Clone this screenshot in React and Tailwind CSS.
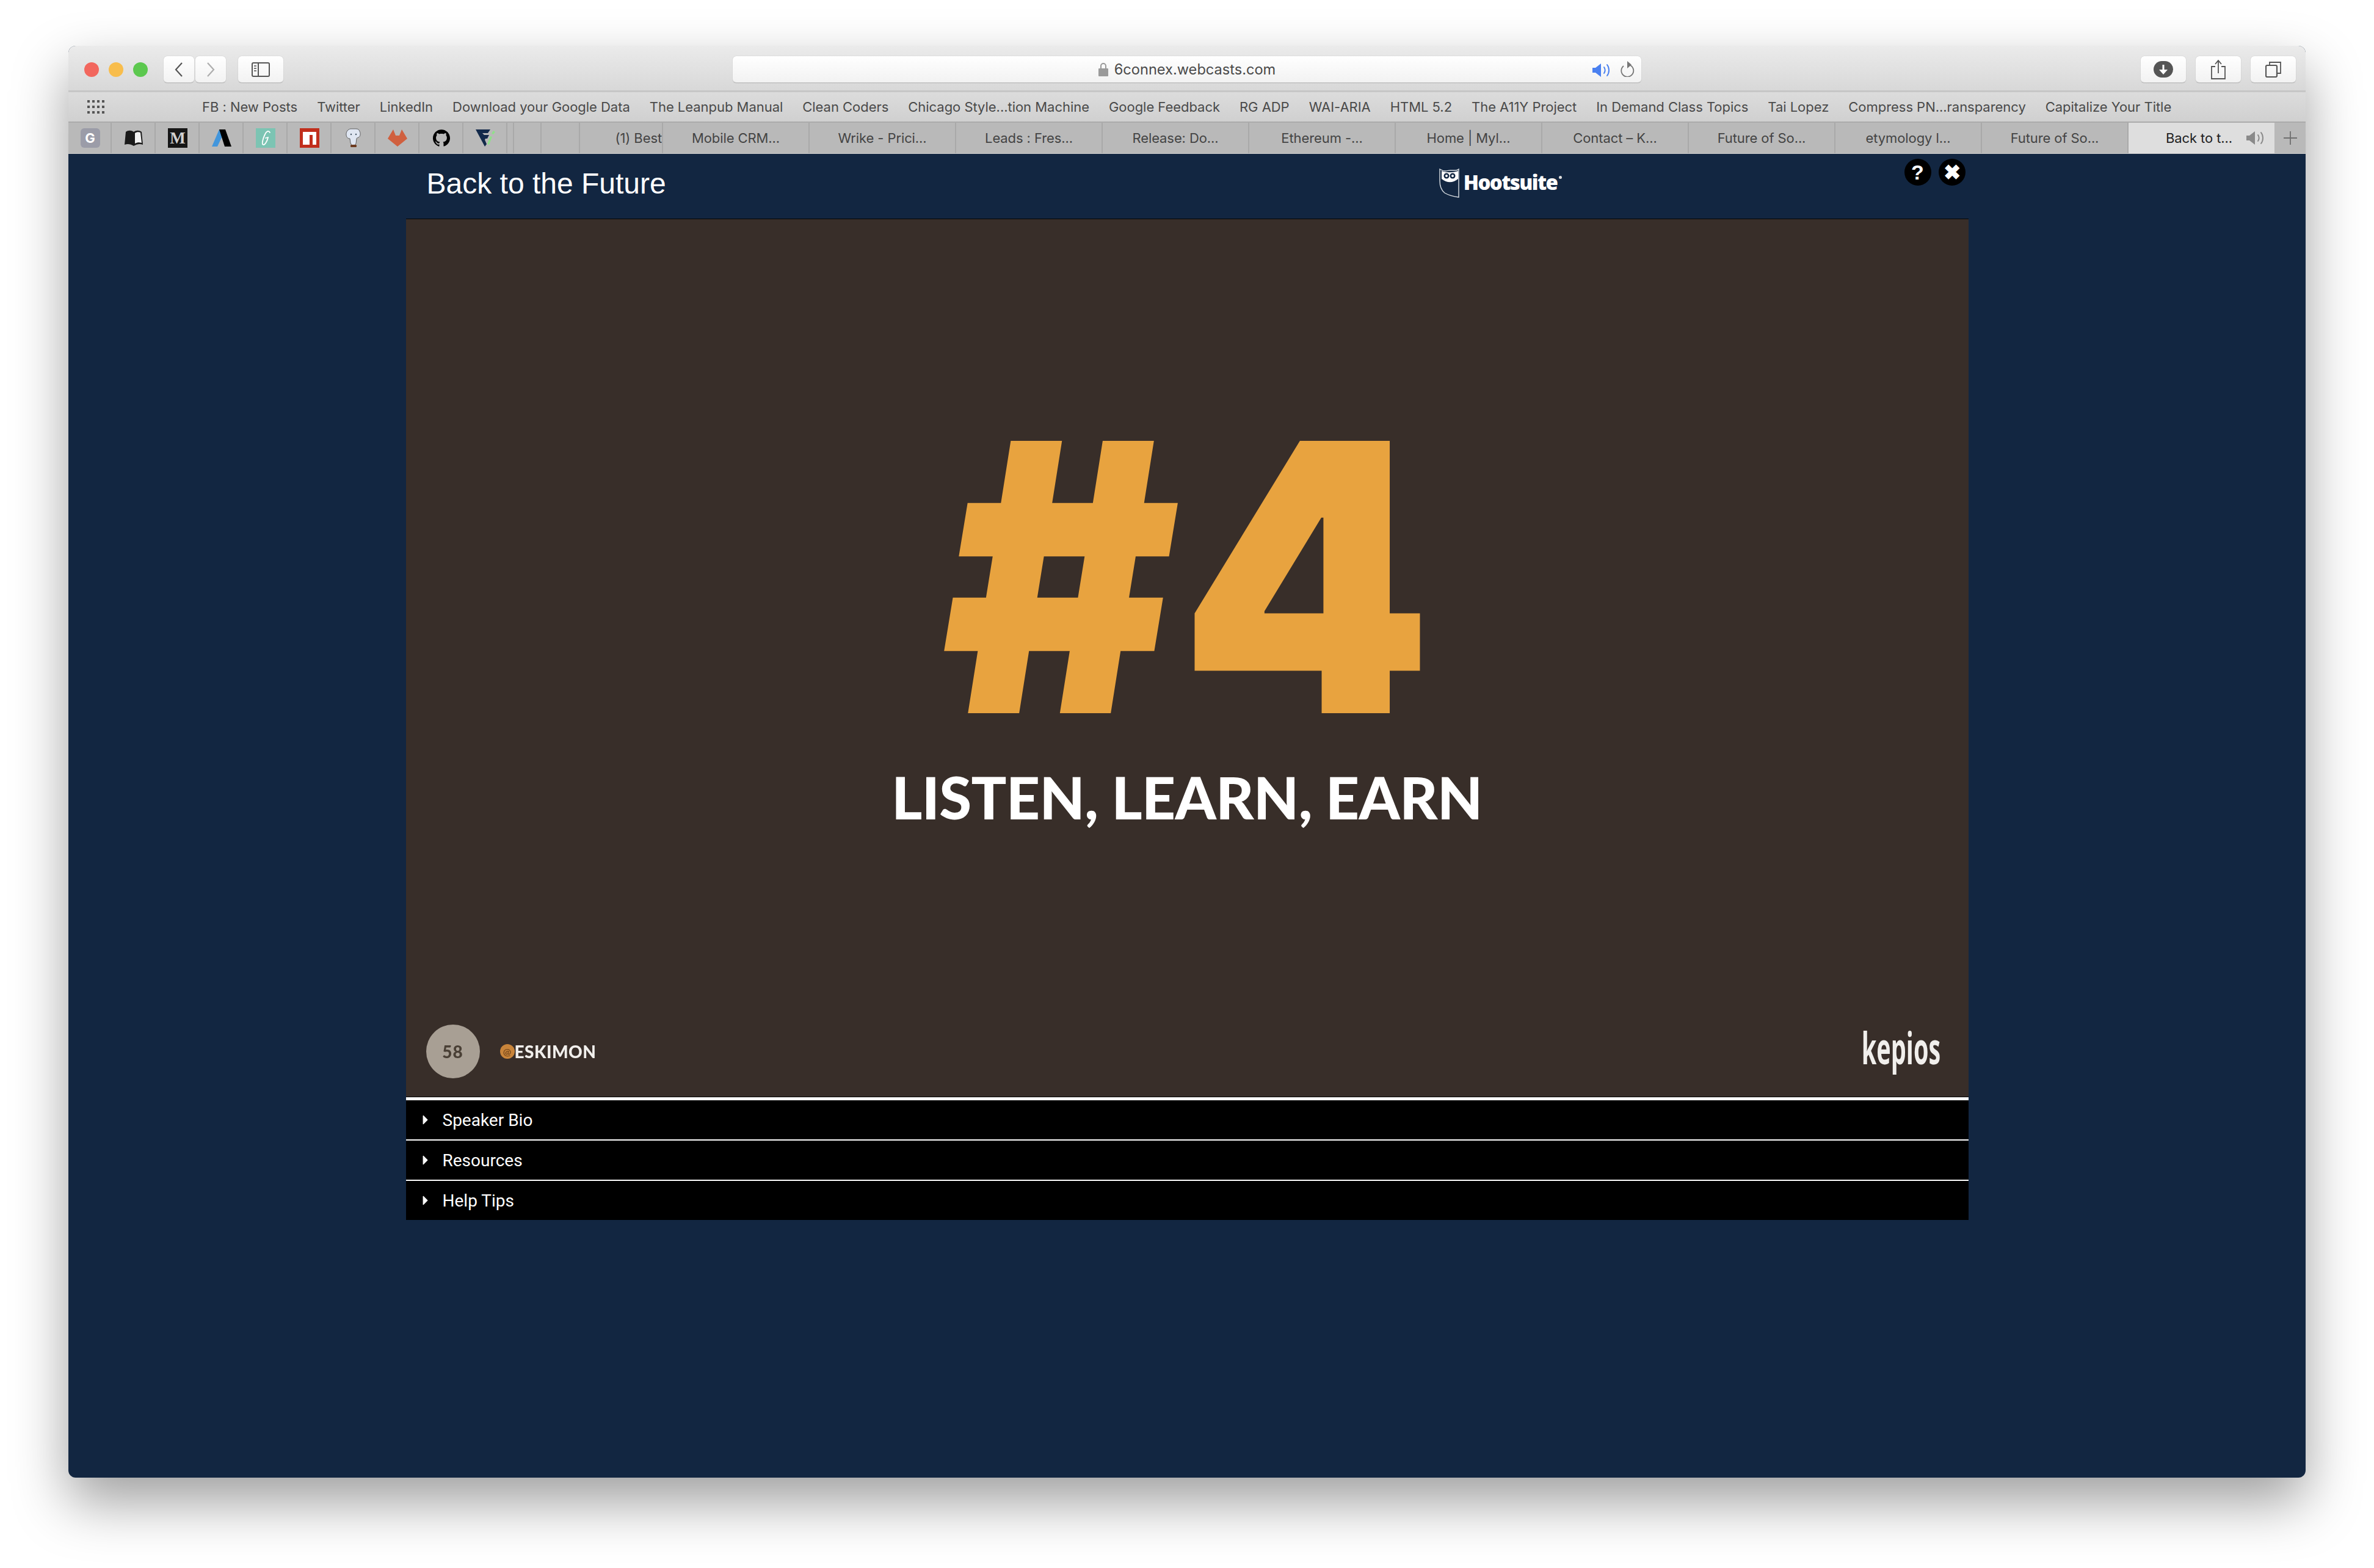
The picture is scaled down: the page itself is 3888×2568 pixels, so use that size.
import { SiGithub } from "react-icons/si";

const sans = "font-['Inter','Noto_Sans',sans-serif]";

const bookmarks = [
  "FB : New Posts",
  "Twitter",
  "LinkedIn",
  "Download your Google Data",
  "The Leanpub Manual",
  "Clean Coders",
  "Chicago Style...tion Machine",
  "Google Feedback",
  "RG ADP",
  "WAI-ARIA",
  "HTML 5.2",
  "The A11Y Project",
  "In Demand Class Topics",
  "Tai Lopez",
  "Compress PN...ransparency",
  "Capitalize Your Title",
];

const tabs = [
  "Mobile CRM...",
  "Wrike - Prici...",
  "Leads : Fres...",
  "Release: Do...",
  "Ethereum -...",
  "Home | Myl...",
  "Contact – K...",
  "Future of So...",
  "etymology l...",
  "Future of So...",
];

const Speaker = ({ color, className }) => (
  <svg viewBox="0 0 32 24" className={className} fill="none">
    <path d="M0 8h5l9-7v22l-9-7H0z" fill={color} />
    <path d="M19 7c2 3 2 7 0 10M24 3c4 5 4 13 0 18" stroke={color} strokeWidth="2" strokeLinecap="round" />
  </svg>
);

const pinned = [
  <div key="g" className="w-8 h-8 rounded-[6px] bg-[#9b9ca8] flex items-center justify-center text-white font-bold text-[22px]">G</div>,
  <svg key="book" viewBox="0 0 32 30" className="w-8 h-[30px]">
    <path d="M3 5c4-3 9-3 13 0 4-3 9-3 13 0l2 21c-5-2-10-1-15 2-5-3-10-4-15-2z" fill="#1a1a1a" />
    <path d="M18 7c3-2 6-2 9-1l2 17c-4-1-7-1-11 1z" fill="#f2f2f2" />
  </svg>,
  <div key="m" className="w-8 h-8 bg-[#161616] flex items-center justify-center text-[#d0d0d0] font-bold text-[27px] font-['Liberation_Serif',serif]">M</div>,
  <svg key="a" viewBox="0 0 32 30" className="w-8 h-[30px]">
    <path d="M0 29 12 1l5 11-8 17z" fill="#4296dc" />
    <path d="M12 1h10l10 28H21z" fill="#000" />
  </svg>,
  <div key="gg" className="w-8 h-8 bg-[#7cc4b3] flex items-center justify-center">
    <svg viewBox="0 0 32 32" className="w-8 h-8" fill="none">
      <path d="M23 7c-2-4-6-2-8 3-3 6-6 16-3 17s7-7 8-12l-4 1" stroke="#fff" strokeWidth="1.8" strokeLinecap="round" strokeLinejoin="round" />
    </svg>
  </div>,
  <div key="npm" className="w-8 h-8 bg-[#c12e1c] flex items-center justify-center">
    <div className="w-[22px] h-[21px] bg-white flex justify-end pr-[6px] pt-[5px] mt-[1px]">
      <div className="w-[5px] h-4 bg-[#c12e1c]" />
    </div>
  </div>,
  <svg key="el" viewBox="0 0 32 32" className="w-8 h-8">
    <path d="M11 1h9c3 0 5 1 6 4 2 4 1 9-2 10-2 1-3 1-3 2l-1 8-2 3h-5l-2-4-1-7c-3 0-6-2-6-7s3-8 7-9z" fill="#dfe6f2" stroke="#444" strokeWidth="0.8" />
    <circle cx="12" cy="10" r="1.2" fill="#456" />
    <circle cx="20" cy="10" r="1.2" fill="#456" />
    <rect x="11" y="27" width="10" height="4" rx="1.5" fill="#6b3a20" />
  </svg>,
  <svg key="gl" viewBox="0 0 32 28" className="w-8 h-7">
    <path d="M0 15 9 0l4 10h6l4-10 9 15-16 13z" fill="#d0603f" />
  </svg>,
  <SiGithub key="gh" className="w-7 h-7 text-black" />,
  <svg key="f" viewBox="0 0 32 32" className="w-8 h-8">
    <path d="M0 2h24l-4 6H11l3 3h8l-3 6h-3l-1 2 3 7-3 4z" fill="#12294a" />
    <path d="m19 26 5-13 3 1-5 13z M26 9l3-5 3 2-3 4z" fill="#8fe08a" />
  </svg>,
];

function ToolButton({ className, children }) {
  return (
    <div className={`h-11 rounded-[6px] bg-linear-to-b from-[#ffffff] to-[#f2f2f2] border-b border-[#b8b8b8] shadow-[0_0_1px_rgba(0,0,0,0.35)] flex items-center justify-center ${className}`}>
      {children}
    </div>
  );
}

function Row({ label, first }) {
  return (
    <div className={`bg-black flex items-center text-white text-[28px] font-['Roboto',sans-serif] ${first ? "h-[69px] border-t-[5px] border-white" : "h-[66px] border-t-2 border-white"}`}>
      <svg viewBox="0 0 8 14" className="w-[9px] h-4 ml-[27px]">
        <path d="M1 1l6 6-6 6z" fill="#fff" stroke="#fff" strokeLinejoin="round" />
      </svg>
      <span className="ml-[24px] mt-[1px]">{label}</span>
    </div>
  );
}

export default function App() {
  return (
    <div className="w-full h-[2568px] bg-white pt-[75px] pl-[112px] overflow-hidden">
      <div className="w-[3664px] h-[2345px] rounded-[12px] overflow-hidden shadow-[0_40px_90px_rgba(0,0,0,0.38)] bg-[#122641] flex flex-col">
        {/* title bar */}
        <div className="h-[76px] shrink-0 bg-linear-to-b from-[#ebebeb] to-[#d8d8d8] border-b-[3px] border-[#c6c6c6] pt-[17px] pl-[26px] flex items-start">
          <div className="flex gap-4 mt-[10px]">
            <div className="w-6 h-6 rounded-full bg-[#f2675e]" />
            <div className="w-6 h-6 rounded-full bg-[#f8bd4c]" />
            <div className="w-6 h-6 rounded-full bg-[#5cc84f]" />
          </div>
          <div className="flex gap-[2px] ml-[26px]">
            <ToolButton className="w-[50px]">
              <svg viewBox="0 0 16 24" className="w-4 h-6" fill="none">
                <path d="M13 1 3 12l10 11" stroke="#555" strokeWidth="2.2" />
              </svg>
            </ToolButton>
            <ToolButton className="w-[50px]">
              <svg viewBox="0 0 16 24" className="w-4 h-6" fill="none">
                <path d="m3 1 10 11L3 23" stroke="#adadad" strokeWidth="2.2" />
              </svg>
            </ToolButton>
          </div>
          <ToolButton className="w-[74px] ml-5">
            <svg viewBox="0 0 30 24" className="w-[30px] h-6" fill="none">
              <rect x="1" y="1" width="28" height="22" rx="2" stroke="#555" strokeWidth="2" />
              <path d="M11 1v22" stroke="#555" strokeWidth="2" />
              <path d="M4 6h4M4 10h4M4 14h4" stroke="#777" strokeWidth="2" />
            </svg>
          </ToolButton>
          <ToolButton className={`relative w-[1488px] ml-[736px] text-[23.6px] text-[#4a4a4a] ${sans}`}>
            <svg viewBox="0 0 16 24" className="w-4 h-6 mr-[10px]" fill="none">
              <path d="M4 11V6a4 4 0 0 1 8 0v5" stroke="#9a9a9a" strokeWidth="2" />
              <rect y="10" width="16" height="13" rx="1" fill="#9a9a9a" />
            </svg>
            <span>6connex.webcasts.com</span>
            <Speaker color="#4a80f0" className="absolute left-[1408px] top-[11px] w-8 h-6" />
            <svg viewBox="0 0 24 26" className="absolute left-[1453px] top-[8px] w-6 h-[26px]" fill="none">
              <path d="M16 6.5A10 10 0 1 1 6 8" stroke="#777" strokeWidth="1.8" />
              <path d="M12 0l7 6-7 6z" fill="#777" />
            </svg>
          </ToolButton>
          <div className="flex gap-4 ml-[818px]">
            <ToolButton className="w-[74px]">
              <div className="w-8 h-[27px] rounded-full bg-[#555] flex items-center justify-center">
                <svg viewBox="0 0 16 18" className="w-4 h-[18px]" fill="none">
                  <path d="M8 1v10" stroke="#fff" strokeWidth="3" />
                  <path d="M1 9h14l-7 8z" fill="#fff" />
                </svg>
              </div>
            </ToolButton>
            <ToolButton className="w-[74px]">
              <svg viewBox="0 0 24 32" className="w-6 h-8" fill="none">
                <path d="M7 11H1v20h22V11h-6M12 22V2M7 7l5-6 5 6" stroke="#555" strokeWidth="1.8" />
              </svg>
            </ToolButton>
            <ToolButton className="w-[74px]">
              <svg viewBox="0 0 26 26" className="w-[26px] h-[26px]" fill="none">
                <path d="M7 6V1h18v18h-5" stroke="#555" strokeWidth="1.8" />
                <rect x="1" y="6" width="18" height="19" rx="2" stroke="#555" strokeWidth="2.2" />
              </svg>
            </ToolButton>
          </div>
        </div>

        {/* bookmarks */}
        <div className={`h-[50px] shrink-0 bg-linear-to-b from-[#dcdcdc] to-[#d0d0d0] border-b-2 border-[#ababab] flex items-center text-[22px] tracking-[-0.035px] text-[#4a4a4a] ${sans}`}>
          <div className="grid grid-cols-4 gap-x-1 gap-y-[5px] w-7 ml-[31px] mr-[160px]">
            {Array.from({ length: 12 }).map((_, i) => (
              <div key={i} className="w-1 h-1 bg-[#555]" />
            ))}
          </div>
          <div className="flex gap-8 whitespace-nowrap">
            {bookmarks.map((b) => (
              <span key={b}>{b}</span>
            ))}
          </div>
        </div>

        {/* tabs */}
        <div className={`h-[51px] shrink-0 bg-[#b9b9b9] border-b border-[#cfcfcf] flex text-[22px] tracking-[-0.1px] text-[#444] ${sans}`}>
          {pinned.map((icon, i) => (
            <div key={i} className={`${i === 0 ? "w-[71px]" : "w-[72px]"} shrink-0 border-r-2 border-[#a9a9a9] pl-[2px] flex items-center justify-center`}>
              {icon}
            </div>
          ))}
          <div className="w-[11px] shrink-0 border-r-2 border-[#a9a9a9]" />
          <div className="w-[45px] shrink-0 border-r-2 border-[#a9a9a9]" />
          <div className="w-[63px] shrink-0 border-r-2 border-[#a9a9a9]" />
          <div className="w-[136px] shrink-0 border-r-2 border-[#a9a9a9] flex items-center justify-end overflow-hidden whitespace-nowrap">
            (1) Best
          </div>
          {tabs.map((t, i) => (
            <div key={i} className="w-[240px] shrink-0 border-r-2 border-[#a9a9a9] flex items-center justify-center whitespace-nowrap">
              {t}
            </div>
          ))}
          <div className="w-[239px] shrink-0 bg-[#dedede] text-[#222] flex items-center whitespace-nowrap pl-[61px]">
            <span>Back to t...</span>
            <Speaker color="#8a8a8a" className="ml-[22px] w-[34px] h-6" />
          </div>
          <div className="flex-1 flex items-center justify-center">
            <svg viewBox="0 0 24 24" className="w-6 h-6" fill="none">
              <path d="M12 1v22M1 12h22" stroke="#6f6f6f" strokeWidth="1.8" />
            </svg>
          </div>
        </div>

        {/* webcast */}
        <div className="w-[2559px] mx-auto flex flex-col">
          <div className="h-[106px] flex items-start">
            <h1 className="ml-[34px] mt-[21px] text-[48px] leading-[56px] text-white font-['Liberation_Sans',sans-serif]">Back to the Future</h1>
            <div className="flex items-start ml-[1266px] mt-[24px]">
              <svg viewBox="0 0 33 48" className="w-[33px] h-12" fill="none">
                <path d="M1 1c3 2 6 3 9 3s6-1 8-1 6 0 9 0c2 0 4-1 5-2v46c-8-1-16-3-23-7C4 36 1 28 1 20z" stroke="#d8dde2" strokeWidth="1.4" />
                <path d="M4 4c8 3 18 3 27 0v13c-9 7-18 7-27 0z" fill="#fff" />
                <circle cx="12" cy="12" r="4.5" fill="#122641" />
                <circle cx="22" cy="12" r="4.5" fill="#122641" />
                <circle cx="12" cy="12" r="2" fill="#fff" />
                <circle cx="22" cy="12" r="2" fill="#fff" />
              </svg>
              <span className="ml-[7px] mt-[3px] text-[33px] leading-[40px] font-extrabold tracking-[-1.6px] text-white font-['Open_Sans',sans-serif]">Hootsuite</span>
              <span className="ml-[3px] mt-[12px] w-[5px] h-[5px] rounded-full bg-[#ddd]" />
            </div>
            <div className="flex gap-3 ml-auto mr-[5px] translate-y-[8px]">
              <div className="w-[44px] h-[44px] rounded-full bg-black flex items-center justify-center text-white text-[34px] font-bold font-['Liberation_Sans',sans-serif]">?</div>
              <div className="w-[44px] h-[44px] rounded-full bg-black flex items-center justify-center text-white text-[34px] font-bold font-['Liberation_Sans',sans-serif]">✖</div>
            </div>
          </div>

          {/* slide */}
          <div className="h-[1439px] bg-[#382e29] border-y border-[#050505] flex flex-col items-center font-['Lato',sans-serif]">
            <div className="mt-[336px] h-[500px] leading-[500px] text-[613px] font-black text-[#e8a33f] font-['Inter',sans-serif] whitespace-nowrap scale-x-[0.96] blur-[0.6px]">#4</div>
            <div className="mt-[55px] text-[96px] leading-[110px] font-black text-white tracking-[-0.6px] whitespace-nowrap blur-[0.5px]">LISTEN, LEARN, EARN</div>
            <div className="w-full mt-auto pb-[30px] pl-[33px] pr-[45px] flex items-center">
              <div className="w-[88px] h-[88px] rounded-full bg-[#a89f94] flex items-center justify-center text-[#4a4036] text-[28px] font-black tracking-[1px] blur-[0.5px]">58</div>
              <div className="ml-[33px] w-6 h-6 rounded-full bg-[#c8843a] flex items-center justify-center text-[16px] leading-none font-bold text-[#7a4a1c] blur-[0.5px]">@</div>
              <span className="text-[28px] font-black text-[#f1efec] tracking-[0.5px] blur-[0.5px]">ESKIMON</span>
              <div className="ml-auto h-[68px] w-[129px] mb-[14px] flex items-center justify-end">
                <span className="text-[72px] leading-none font-bold text-[#f1efec] font-['Open_Sans',sans-serif] scale-x-[0.55] origin-right blur-[0.6px]">kepios</span>
              </div>
            </div>
          </div>

          <Row label="Speaker Bio" first />
          <Row label="Resources" />
          <Row label="Help Tips" />
        </div>
      </div>
    </div>
  );
}
